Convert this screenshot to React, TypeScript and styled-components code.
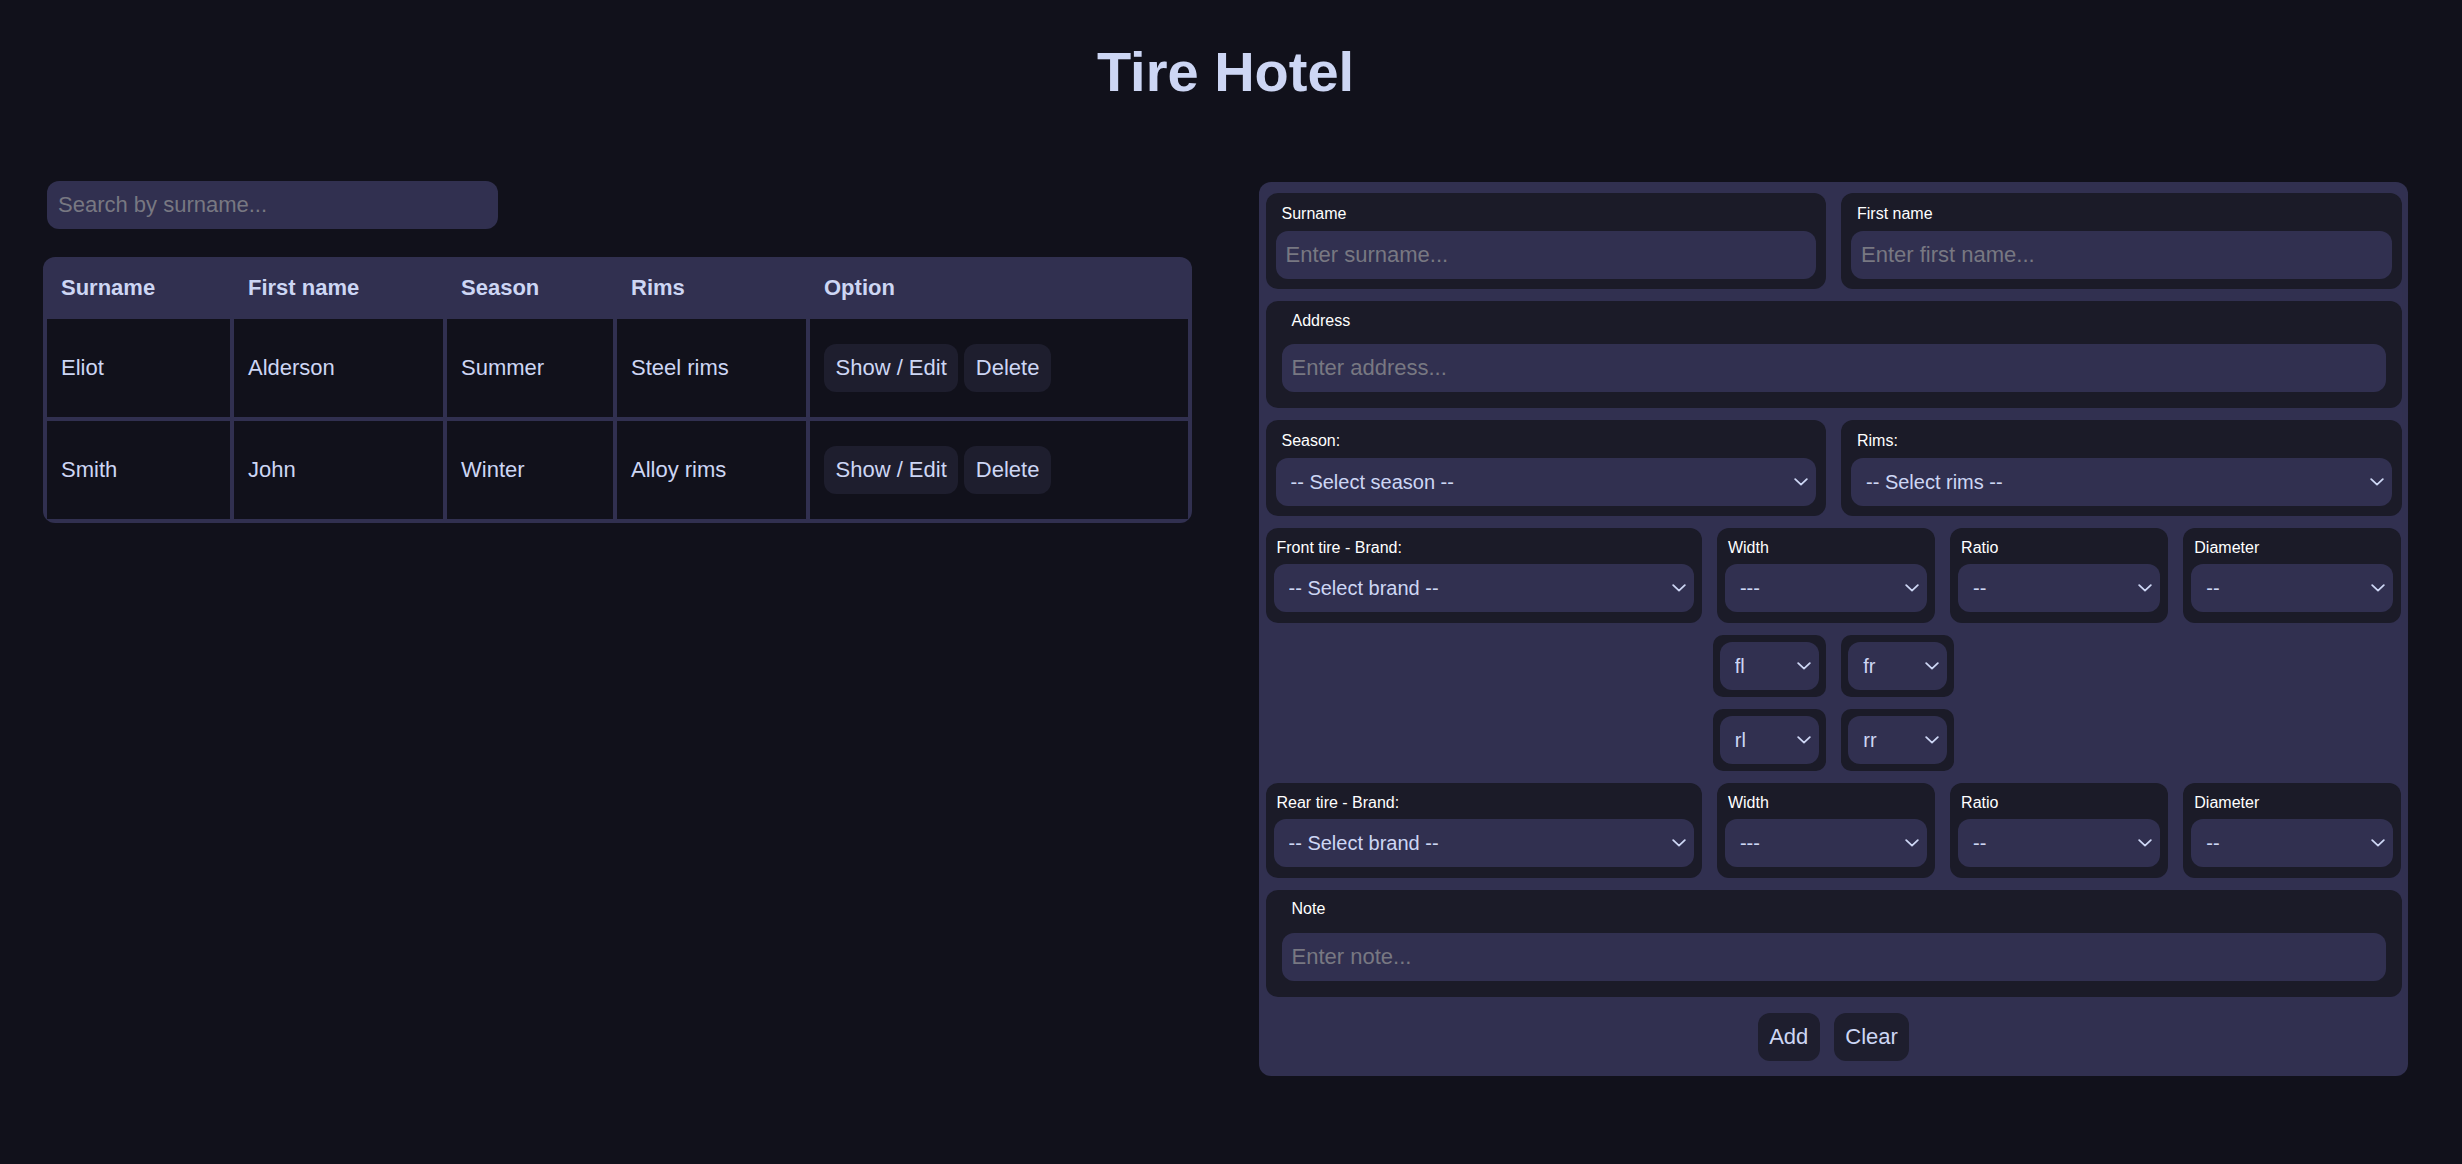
import React from "react";
import styled, { createGlobalStyle, css } from "styled-components";

const GlobalStyle = createGlobalStyle`
  *, *::before, *::after { box-sizing: border-box; }
  html, body { margin: 0; padding: 0; background: #11111b; }
  body {
    font-family: "Liberation Sans", Arial, sans-serif;
    color: #cdd6f4;
  }
`;

const Page = styled.div`
  width: 2365px;
  margin-left: 43px;
  padding-top: 40px;
  min-height: 1164px;
`;

const Title = styled.h1`
  margin: 0;
  text-align: center;
  font-size: 56px;
  font-weight: 700;
  line-height: 64px;
  color: #cdd6f4;
`;

const Columns = styled.div`
  display: grid;
  grid-template-columns: 1fr 1fr;
  column-gap: 67px;
  margin-top: 77px;
  align-items: start;
`;

const LeftColumn = styled.section`
  display: flex;
  flex-direction: column;
  align-items: flex-start;
`;

const controlBase = css`
  height: 48px;
  border: none;
  outline: none;
  border-radius: 12px;
  background: #313050;
  color: #cdd6f4;
  font-family: "Liberation Sans", Arial, sans-serif;
  &::placeholder {
    color: #787882;
  }
`;

const SearchInput = styled.input`
  ${controlBase};
  width: 451px;
  margin-left: 4px;
  padding: 0 11px;
  font-size: 22px;
`;

const TableFrame = styled.div`
  margin-top: 28px;
  width: 100%;
  background: #313050;
  border-radius: 12px;
  overflow: hidden;
`;

const Table = styled.table`
  width: 100%;
  table-layout: fixed;
  border-collapse: separate;
  border-spacing: 4px;
  font-size: 22px;
`;

const HeadCell = styled.th<{ $w?: number }>`
  ${(p) => (p.$w ? `width: ${p.$w}px;` : "")}
  padding: 14px 14px;
  line-height: 26px;
  text-align: left;
  font-weight: 700;
  color: #cdd6f4;
`;

const BodyCell = styled.td`
  background: #11111b;
  padding: 25px 14px;
  line-height: 26px;
  vertical-align: middle;
  color: #cdd6f4;
`;

const ButtonGroup = styled.div`
  display: flex;
  gap: 6px;
`;

const ActionButton = styled.button`
  height: 48px;
  padding: 0 11.5px;
  border: none;
  border-radius: 12px;
  background: #1e1e2e;
  color: #cdd6f4;
  font-family: "Liberation Sans", Arial, sans-serif;
  font-size: 22px;
  cursor: pointer;
`;

const FormPanel = styled.form`
  margin-top: 1px;
  background: #313050;
  border-radius: 12px;
  padding: 11px 6.5px 15px;
  display: flex;
  flex-direction: column;
  gap: 12px;
`;

const TwoCols = styled.div`
  display: grid;
  grid-template-columns: 1fr 1fr;
  column-gap: 15px;
`;

const TireRow = styled.div`
  display: grid;
  grid-template-columns: 2fr 1fr 1fr 1fr;
  column-gap: 15px;
`;

type Variant = "normal" | "tire" | "wide" | "mini";

const boxPadding: Record<Variant, string> = {
  normal: "12px 10px 10px",
  tire: "11px 8px 11px",
  wide: "10.5px 16px 16px",
  mini: "7px",
};
const boxGap: Record<Variant, string> = {
  normal: "8px",
  tire: "7px",
  wide: "14.5px",
  mini: "0px",
};
const labelIndent: Record<Variant, string> = {
  normal: "6px",
  tire: "3px",
  wide: "10px",
  mini: "0px",
};

const FieldBox = styled.div<{ $variant: Variant }>`
  display: flex;
  flex-direction: column;
  gap: ${(p) => boxGap[p.$variant]};
  padding: ${(p) => boxPadding[p.$variant]};
  background: #1b1b28;
  border-radius: ${(p) => (p.$variant === "mini" ? "10px" : "12px")};
`;

const Label = styled.label<{ $variant: Variant }>`
  display: block;
  padding-left: ${(p) => labelIndent[p.$variant]};
  font-size: 16px;
  line-height: 18px;
  color: #ffffff;
`;

const TextInput = styled.input`
  ${controlBase};
  width: 100%;
  padding: 0 10px;
  font-size: 22px;
`;

const SelectWrap = styled.div<{ $w?: number }>`
  position: relative;
  width: ${(p) => (p.$w ? `${p.$w}px` : "100%")};
`;

const Select = styled.select`
  ${controlBase};
  appearance: none;
  -webkit-appearance: none;
  width: 100%;
  padding: 0 30px 0 15px;
  font-size: 20px;
  cursor: pointer;
`;

const Chevron = styled.svg`
  position: absolute;
  right: 8px;
  top: 50%;
  width: 14px;
  height: 8px;
  transform: translateY(-50%);
  pointer-events: none;
`;

const PositionGrid = styled.div`
  display: grid;
  grid-template-columns: repeat(2, max-content);
  justify-content: center;
  column-gap: 15.5px;
  row-gap: 11.5px;
`;

const ButtonRow = styled.div`
  margin-top: 4px;
  display: flex;
  justify-content: center;
  gap: 14px;
`;

const Dropdown: React.FC<{ placeholder: string; options?: string[]; width?: number }> = ({
  placeholder,
  options = [],
  width,
}) => (
  <SelectWrap $w={width}>
    <Select defaultValue="">
      <option value="">{placeholder}</option>
      {options.map((o) => (
        <option key={o} value={o}>
          {o}
        </option>
      ))}
    </Select>
    <Chevron viewBox="0 0 14 8" fill="none">
      <polyline
        points="1.2,1.2 7,6.6 12.8,1.2"
        stroke="#cdd6f4"
        strokeWidth="1.8"
        strokeLinecap="round"
        strokeLinejoin="round"
      />
    </Chevron>
  </SelectWrap>
);

const TireSection: React.FC<{ title: string }> = ({ title }) => (
  <TireRow>
    <FieldBox $variant="tire">
      <Label $variant="tire">{title}</Label>
      <Dropdown placeholder="-- Select brand --" options={["Michelin", "Continental", "Bridgestone"]} />
    </FieldBox>
    <FieldBox $variant="tire">
      <Label $variant="tire">Width</Label>
      <Dropdown placeholder="---" options={["195", "205", "215", "225"]} />
    </FieldBox>
    <FieldBox $variant="tire">
      <Label $variant="tire">Ratio</Label>
      <Dropdown placeholder="--" options={["45", "50", "55", "60"]} />
    </FieldBox>
    <FieldBox $variant="tire">
      <Label $variant="tire">Diameter</Label>
      <Dropdown placeholder="--" options={["15", "16", "17", "18"]} />
    </FieldBox>
  </TireRow>
);

const rows = [
  { surname: "Eliot", first: "Alderson", season: "Summer", rims: "Steel rims" },
  { surname: "Smith", first: "John", season: "Winter", rims: "Alloy rims" },
];

export default function App() {
  return (
    <>
      <GlobalStyle />
      <Page>
        <Title>Tire Hotel</Title>
        <Columns>
          <LeftColumn>
            <SearchInput placeholder="Search by surname..." />
            <TableFrame>
              <Table>
                <thead>
                  <tr>
                    <HeadCell $w={183}>Surname</HeadCell>
                    <HeadCell $w={209}>First name</HeadCell>
                    <HeadCell $w={166}>Season</HeadCell>
                    <HeadCell $w={189}>Rims</HeadCell>
                    <HeadCell>Option</HeadCell>
                  </tr>
                </thead>
                <tbody>
                  {rows.map((r) => (
                    <tr key={r.surname}>
                      <BodyCell>{r.surname}</BodyCell>
                      <BodyCell>{r.first}</BodyCell>
                      <BodyCell>{r.season}</BodyCell>
                      <BodyCell>{r.rims}</BodyCell>
                      <BodyCell>
                        <ButtonGroup>
                          <ActionButton type="button">Show / Edit</ActionButton>
                          <ActionButton type="button">Delete</ActionButton>
                        </ButtonGroup>
                      </BodyCell>
                    </tr>
                  ))}
                </tbody>
              </Table>
            </TableFrame>
          </LeftColumn>

          <FormPanel onSubmit={(e) => e.preventDefault()}>
            <TwoCols>
              <FieldBox $variant="normal">
                <Label $variant="normal">Surname</Label>
                <TextInput placeholder="Enter surname..." />
              </FieldBox>
              <FieldBox $variant="normal">
                <Label $variant="normal">First name</Label>
                <TextInput placeholder="Enter first name..." />
              </FieldBox>
            </TwoCols>

            <FieldBox $variant="wide">
              <Label $variant="wide">Address</Label>
              <TextInput placeholder="Enter address..." />
            </FieldBox>

            <TwoCols>
              <FieldBox $variant="normal">
                <Label $variant="normal">Season:</Label>
                <Dropdown placeholder="-- Select season --" options={["Summer", "Winter"]} />
              </FieldBox>
              <FieldBox $variant="normal">
                <Label $variant="normal">Rims:</Label>
                <Dropdown placeholder="-- Select rims --" options={["Steel rims", "Alloy rims"]} />
              </FieldBox>
            </TwoCols>

            <TireSection title="Front tire - Brand:" />

            <PositionGrid>
              {["fl", "fr", "rl", "rr"].map((pos) => (
                <FieldBox key={pos} $variant="mini">
                  <Dropdown placeholder={pos} options={["1", "2", "3", "4", "5", "6", "7", "8"]} width={99} />
                </FieldBox>
              ))}
            </PositionGrid>

            <TireSection title="Rear tire - Brand:" />

            <FieldBox $variant="wide">
              <Label $variant="wide">Note</Label>
              <TextInput placeholder="Enter note..." />
            </FieldBox>

            <ButtonRow>
              <ActionButton type="submit">Add</ActionButton>
              <ActionButton type="reset">Clear</ActionButton>
            </ButtonRow>
          </FormPanel>
        </Columns>
      </Page>
    </>
  );
}
